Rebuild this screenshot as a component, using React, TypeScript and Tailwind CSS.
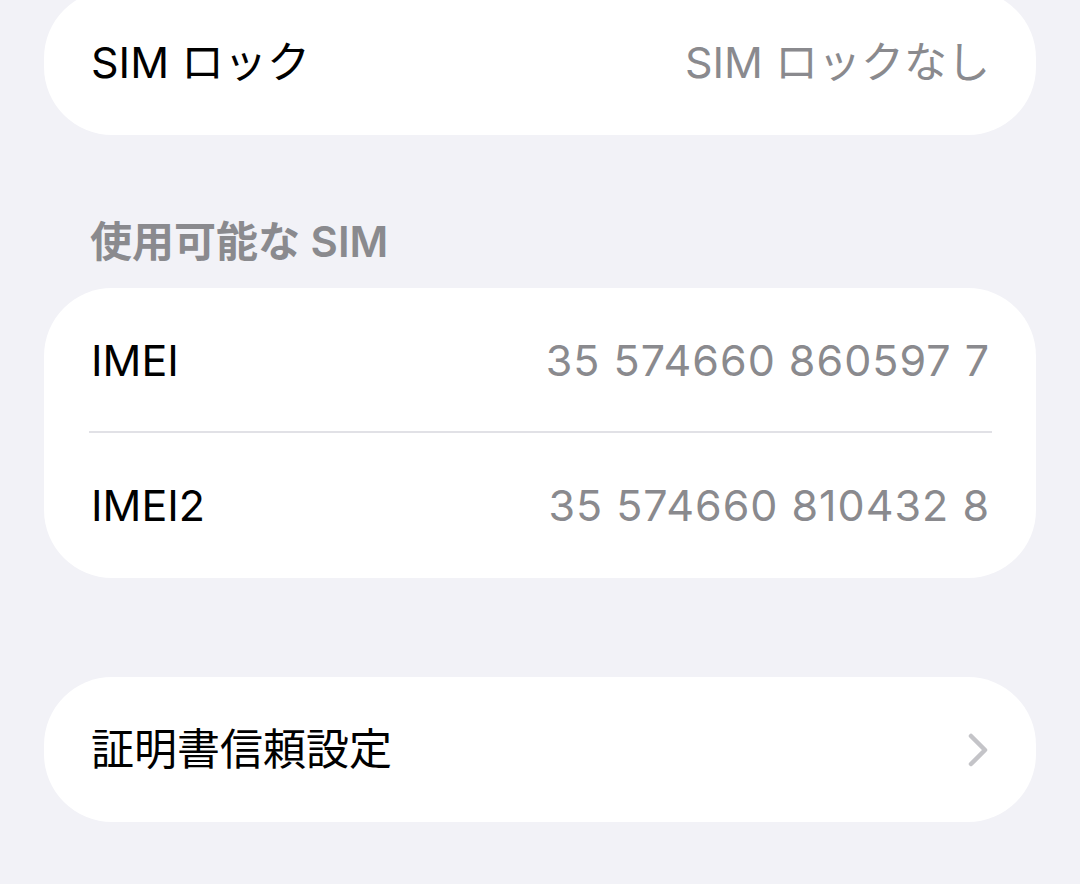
const FONT = "font-['Inter','Noto_Sans_CJK_JP',sans-serif]"

type RowProps = { label: string; value?: string; numeric?: boolean; divider?: boolean }

const Row = ({ label, value, numeric, divider }: RowProps) => (
  <div className="relative flex h-[145px] items-center justify-between pl-[47px] pr-[46px]">
    <span className="text-[43px] text-black">{label}</span>
    {value && (
      <span className={numeric ? 'text-[43px] tracking-[1px] text-[#8a8a8e]' : 'text-[43px] text-[#8a8a8e]'}>
        {value}
      </span>
    )}
    {divider && <div className="absolute bottom-0 left-[45px] right-[44px] h-[2px] bg-[#e1e1e6]" />}
  </div>
)

const Chevron = () => (
  <svg width="20" height="34" viewBox="0 0 20 34" fill="none" className="shrink-0">
    <path d="M3 3 L17 17 L3 31" stroke="#c4c4c8" strokeWidth="4.5" strokeLinecap="round" strokeLinejoin="round" />
  </svg>
)

export default function App() {
  return (
    <div className={`${FONT} h-[884px] w-[1080px] overflow-hidden bg-[#f2f2f7] px-[44px]`}>
      {/* SIM lock */}
      <div className="-mt-[10px] overflow-hidden rounded-[68px] bg-white">
        <Row label="SIM ロック" value="SIM ロックなし" />
      </div>

      {/* available SIMs */}
      <div className="mt-[81px] mb-[20px] pl-[46px] text-[42px] leading-[52px] font-semibold text-[#8a8a8e]">
        使用可能な SIM
      </div>
      <div className="overflow-hidden rounded-[68px] bg-white">
        <Row label="IMEI" value="35 574660 860597 7" numeric divider />
        <Row label="IMEI2" value="35 574660 810432 8" numeric />
      </div>

      {/* certificate trust */}
      <div className="mt-[99px] flex h-[145px] items-center justify-between rounded-[68px] bg-white pl-[47px] pr-[48px]">
        <span className="text-[43px] text-black">証明書信頼設定</span>
        <Chevron />
      </div>
    </div>
  )
}
